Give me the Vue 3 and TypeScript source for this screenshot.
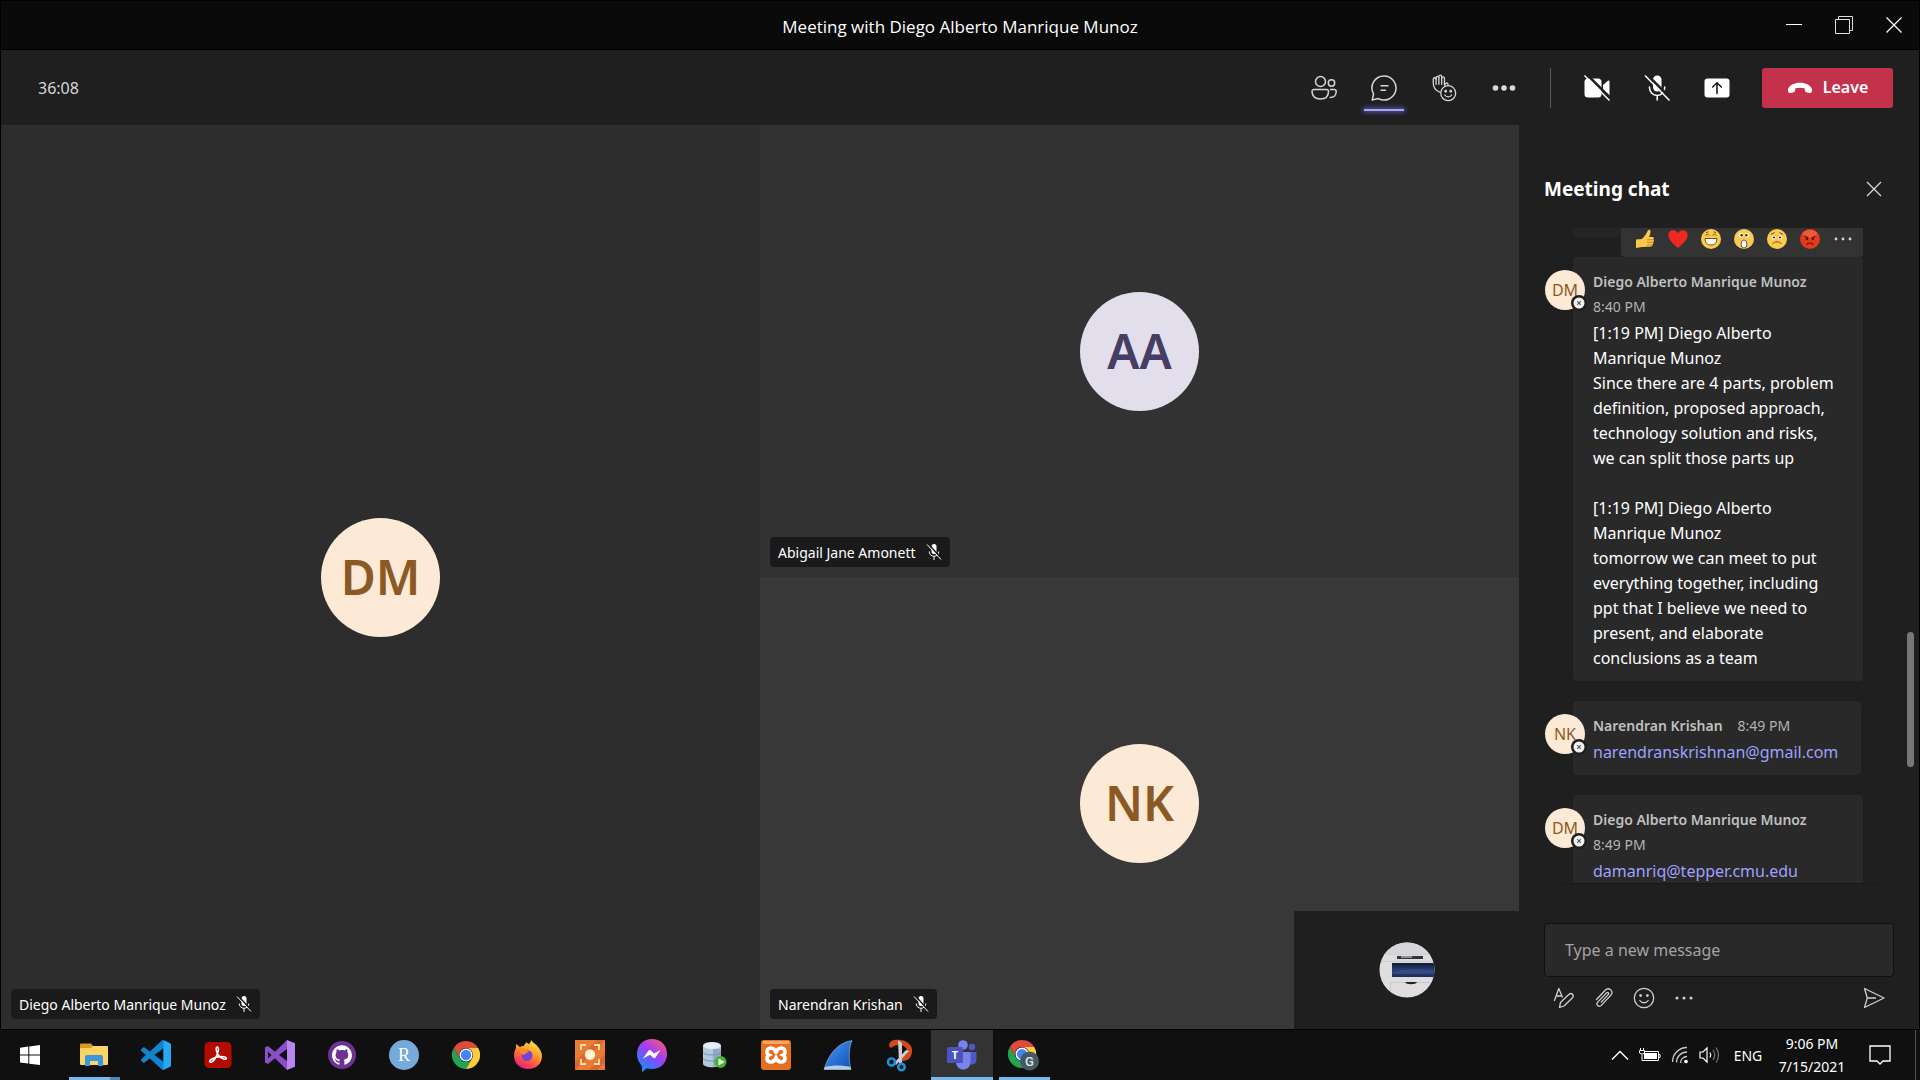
<script setup lang="ts">
import { ref } from 'vue'

interface Participant {
  name: string
  initials: string
  area: string
  tone: string
}

interface ChatMessage {
  id: number
  author: string
  initials: string
  time: string
  stacked: boolean
  text?: string
  email?: string
  reactions?: boolean
}

const participants: Participant[] = [
  { name: 'Diego Alberto Manrique Munoz', initials: 'DM', area: 'left', tone: 'peach' },
  { name: 'Abigail Jane Amonett', initials: 'AA', area: 'top', tone: 'lilac' },
  { name: 'Narendran Krishan', initials: 'NK', area: 'bottom', tone: 'peach' },
]

const messages: ChatMessage[] = [
  {
    id: 1,
    author: 'Diego Alberto Manrique Munoz',
    initials: 'DM',
    time: '8:40 PM',
    stacked: true,
    reactions: true,
    text: [
      '[1:19 PM] Diego Alberto',
      'Manrique Munoz',
      'Since there are 4 parts, problem',
      'definition, proposed approach,',
      'technology solution and risks,',
      'we can split those parts up',
      '',
      '[1:19 PM] Diego Alberto',
      'Manrique Munoz',
      'tomorrow we can meet to put',
      'everything together, including',
      'ppt that I believe we need to',
      'present, and elaborate',
      'conclusions as a team',
    ].join('\n'),
  },
  {
    id: 2,
    author: 'Narendran Krishan',
    initials: 'NK',
    time: '8:49 PM',
    stacked: false,
    email: 'narendranskrishnan@gmail.com',
  },
  {
    id: 3,
    author: 'Diego Alberto Manrique Munoz',
    initials: 'DM',
    time: '8:49 PM',
    stacked: true,
    email: 'damanriq@tepper.cmu.edu',
  },
]

const draft = ref('')
</script>

<template>
  <div class="desktop">
    <header class="titlebar">
      <h1>Meeting with Diego Alberto Manrique Munoz</h1>
      <div class="window-controls">
        <button type="button" aria-label="Minimize">
          <svg width="18" height="18" viewBox="0 0 18 18"><path d="M1 8.500h16" stroke="#fff" /></svg>
        </button>
        <button type="button" aria-label="Restore">
          <svg width="18" height="18" viewBox="0 0 18 18" fill="none" stroke="#ddd">
            <path d="M.5 3.500h14v14H.5zM3.500 3.500v-3h14v14h-3" />
          </svg>
        </button>
        <button type="button" aria-label="Close">
          <svg width="18" height="18" viewBox="0 0 18 18"><path d="M1.500 1.500l15 15M16.500 1.500l-15 15" stroke="#fff" stroke-width="1.200" /></svg>
        </button>
      </div>
    </header>

    <div class="toolbar">
      <span class="timer">36:08</span>
      <nav class="tools" aria-label="Meeting tools">
        <button type="button" aria-label="People">
          <svg width="26" height="26" viewBox="0 0 26 26" fill="none" stroke="#d6d6d6" stroke-width="1.500">
            <circle cx="9.500" cy="6.500" r="5" />
            <circle cx="20.500" cy="8" r="3.200" />
            <path d="M3 14.500h12.500a2 2 0 0 1 2 2c0 5-3.500 7.500-8.200 7.500S1 21.500 1 16.500a2 2 0 0 1 2-2z" />
            <path d="M19 14.500h4.200a2 2 0 0 1 2 2c0 4-2.200 6.200-6.500 6" />
          </svg>
        </button>
        <button type="button" class="active" aria-label="Show conversation">
          <svg width="28" height="28" viewBox="0 0 28 28" fill="none" stroke="#d6d6d6" stroke-width="1.500" stroke-linejoin="round" stroke-linecap="round">
            <path d="M14 2a12 12 0 1 1-5.600 22.600L2.200 26l1.400-6A12 12 0 0 1 14 2z" />
            <path d="M11 11.700h7M11 16.300h4.500" />
          </svg>
        </button>
        <button type="button" aria-label="Raise hand and reactions">
          <svg width="28" height="28" viewBox="0 0 28 30" fill="none" stroke="#d6d6d6" stroke-width="1.400" stroke-linejoin="round" stroke-linecap="round">
            <path d="M9.500 19.500C5 18 2.500 14 2.500 9.500v-4a1.500 1.500 0 0 1 3 0V4a1.500 1.500 0 0 1 3 0V2.800a1.500 1.500 0 0 1 3 0V4.500a1.500 1.500 0 0 1 3 0V12l1.500-2c.8-1 2.700-.2 2.200 1.200" />
            <path d="M5.500 5v6M8.500 4v7M11.500 4v7" />
            <circle cx="18.500" cy="20.500" r="8" fill="#1f1f1f" />
            <circle cx="15.800" cy="18.500" r=".8" fill="#d6d6d6" />
            <circle cx="21.200" cy="18.500" r=".8" fill="#d6d6d6" />
            <path d="M14.800 22.500c1.800 2.600 5.600 2.600 7.400 0" />
          </svg>
        </button>
        <button type="button" aria-label="More actions">
          <svg width="24" height="8" viewBox="0 0 24 8" fill="#dcdcdc">
            <circle cx="3.500" cy="4" r="2.800" /><circle cx="12" cy="4" r="2.800" /><circle cx="20.500" cy="4" r="2.800" />
          </svg>
        </button>
        <span class="divider"></span>
        <button type="button" aria-label="Turn camera on">
          <svg width="28" height="28" viewBox="0 0 28 28">
            <rect x="1.500" y="4.500" width="17" height="19" rx="3.500" fill="#fff" />
            <path d="M20 11l5-4.200a1 1 0 0 1 1.500.8v13.300a1 1 0 0 1-1.500.8L20 17.500z" fill="#fff" />
            <path d="M3.500 0L28 24.500" stroke="#1f1f1f" stroke-width="2.500" />
            <path d="M1.500 1.500L26.500 26.500" stroke="#fff" stroke-width="1.500" />
          </svg>
        </button>
        <button type="button" aria-label="Unmute">
          <svg width="28" height="28" viewBox="0 0 28 28">
            <rect x="10" y="1.500" width="8.500" height="16" rx="4.200" fill="#fff" />
            <path d="M6.500 13v.8a7.600 7.600 0 0 0 15.200 0V13M14.200 21.500V26" fill="none" stroke="#fff" stroke-width="1.500" stroke-linecap="round" />
            <path d="M3.500 0L28 24.500" stroke="#1f1f1f" stroke-width="2.500" />
            <path d="M2 1.500L26.500 26.500" stroke="#fff" stroke-width="1.500" />
          </svg>
        </button>
        <button type="button" aria-label="Share content">
          <svg width="26" height="20" viewBox="0 0 26 20">
            <rect x=".5" y=".5" width="25" height="19" rx="3" fill="#fff" />
            <path d="M13 15.500V5M8.700 9L13 4.700 17.300 9" fill="none" stroke="#1f1f1f" stroke-width="1.600" stroke-linecap="round" stroke-linejoin="round" />
          </svg>
        </button>
        <button type="button" class="leave">
          <svg width="26" height="12" viewBox="0 0 26 12">
            <path d="M13 .8c5.800 0 10.300 2.300 11.700 5.800.5 1.200.3 2.400 0 3.400-.3.900-1.100 1.200-2 1l-3.400-.8c-.8-.2-1.300-.8-1.400-1.600l-.3-2.300C14.800 5.600 11.200 5.600 8.400 6.300l-.3 2.300c-.1.800-.6 1.400-1.400 1.600L3.300 11c-.9.200-1.700-.1-2-1-.3-1-.5-2.200 0-3.400C2.700 3.100 7.200.8 13 .8z" fill="#fff" />
          </svg>
          <span>Leave</span>
        </button>
      </nav>
    </div>

    <main class="meeting">
      <section class="stage" aria-label="Participants">
        <article v-for="p in participants" :key="p.name" class="tile" :class="p.area">
          <span class="avatar" :class="p.tone">{{ p.initials }}</span>
          <span class="nameplate">
            {{ p.name }}
            <svg width="16" height="18" viewBox="0 0 16 18">
              <rect x="5.500" y="1" width="5" height="10" rx="2.500" fill="#fff" />
              <path d="M3.200 8.500a4.800 4.800 0 0 0 9.600 0M8 13.500v3.500" fill="none" stroke="#fff" />
              <path d="M2 .5l13 14.500" stroke="#1a1a1a" stroke-width="1.500" />
              <path d="M1 1.500l14 15" stroke="#fff" />
            </svg>
          </span>
        </article>
        <div class="self-view">
          <svg width="56" height="56" viewBox="0 0 56 56">
            <defs>
              <clipPath id="self-clip"><circle cx="28" cy="28" r="27.500" /></clipPath>
              <linearGradient id="self-blue" x1="0" y1="0" x2="0" y2="1">
                <stop offset="0" stop-color="#111a36" /><stop offset=".5" stop-color="#2b3f72" /><stop offset="1" stop-color="#1c2c5c" />
              </linearGradient>
            </defs>
            <g clip-path="url(#self-clip)">
              <rect width="56" height="56" fill="#dedee0" />
              <path d="M0 0h56v12H0z" fill="#d6d6d8" />
              <path d="M0 12h56v1H0zM0 19h56v1H0z" fill="#cdcdd0" />
              <rect x="18" y="14" width="26" height="3" fill="#33353a" />
              <rect x="22" y="14" width="11" height="2" fill="#8d9094" />
              <rect x="13" y="21" width="43" height="14" fill="url(#self-blue)" />
              <path d="M13 30c14-3 28-3 43-1v3H13z" fill="#3d5690" opacity=".6" />
              <path d="M12 40h44v1H12zM11 40h1v10h-1z" fill="#c8c8cb" />
              <path d="M26 40h12c-1 3-11 3-12 0z" fill="#222" />
            </g>
          </svg>
        </div>
      </section>

      <aside class="chat" aria-label="Meeting chat">
        <header class="chat-head">
          <h2>Meeting chat</h2>
          <button type="button" aria-label="Close chat">
            <svg width="16" height="16" viewBox="0 0 16 16"><path d="M1 1l14 14M15 1L1 15" stroke="#ddd" stroke-width="1.200" /></svg>
          </button>
        </header>

        <div class="chat-body">
          <div class="messages">
            <div class="previous"></div>
            <div v-for="m in messages" :key="m.id" class="message">
              <span class="mini peach">
                {{ m.initials }}
                <svg class="status" width="16" height="16" viewBox="0 0 16 16">
                  <circle cx="8" cy="8" r="8" fill="#1f1f1f" />
                  <circle cx="8" cy="8" r="5.500" fill="#f2f2f2" />
                  <path d="M6.200 6.200l3.600 3.600M9.800 6.200L6.200 9.800" stroke="#555" stroke-width="1.100" />
                </svg>
              </span>
              <div class="bubble" :class="{ fit: !m.stacked }">
                <div v-if="m.reactions" class="reactions">
                  <button type="button" aria-label="Like">
                    <svg width="20" height="20" viewBox="0 0 20 20">
                      <path d="M1 10.500l6-.5c3-3 4.500-5.500 5.800-8.500.6-1.300 2.700-.8 2.700 1 0 1.900-.7 4-1.500 5.500h3.500c1.500 0 1.800 2 .7 2.500 1.100.5 1 2.300-.2 2.600.8.700.5 2.200-.6 2.500.4 1-.2 2-1.400 2-3.500.2-6 .6-9 .3L1 19z" fill="#fcc84a" />
                      <path d="M12 10.800h6M12 13.400h5.800M12 16h5" stroke="#c07d1c" stroke-width=".9" />
                    </svg>
                  </button>
                  <button type="button" aria-label="Heart">
                    <svg width="20" height="20" viewBox="0 0 20 20"><path d="M10 19C5 14.500.3 10.500.3 6.200.3 1 7-.6 10 4.200 13-.6 19.700 1 19.700 6.200c0 4.300-4.700 8.300-9.700 12.800z" fill="#f0281f" /></svg>
                  </button>
                  <button type="button" aria-label="Laugh">
                    <svg width="20" height="20" viewBox="0 0 20 20">
                      <circle cx="10" cy="10" r="10" fill="#fbcb4f" />
                      <path d="M4 9.500h12c0 4-2.500 6.500-6 6.500s-6-2.500-6-6.500z" fill="#fff" stroke="#7a4b12" />
                      <path d="M4.500 6.500c1-1.500 3-1.500 4 0M11.500 6.500c1-1.500 3-1.500 4 0M5 3.600l2.500-.8M15 3.600l-2.500-.8" fill="none" stroke="#7a4b12" />
                    </svg>
                  </button>
                  <button type="button" aria-label="Surprised">
                    <svg width="20" height="20" viewBox="0 0 20 20">
                      <circle cx="10" cy="10" r="10" fill="#fbcb4f" />
                      <circle cx="7" cy="6.300" r="2.300" fill="#fff" /><circle cx="13" cy="6.300" r="2.300" fill="#fff" />
                      <circle cx="7.600" cy="6.300" r="1.200" fill="#3a2a15" /><circle cx="12.400" cy="6.300" r="1.200" fill="#3a2a15" />
                      <ellipse cx="10" cy="15" rx="3" ry="4" fill="#fff" stroke="#6e5a3c" />
                    </svg>
                  </button>
                  <button type="button" aria-label="Sad">
                    <svg width="20" height="20" viewBox="0 0 20 20">
                      <circle cx="10" cy="10" r="10" fill="#fbcb4f" />
                      <circle cx="6.700" cy="8.500" r="2" fill="#fff" /><circle cx="13.300" cy="8.500" r="2" fill="#fff" />
                      <circle cx="7" cy="8.500" r="1.100" fill="#3a2a15" /><circle cx="13" cy="8.500" r="1.100" fill="#3a2a15" />
                      <path d="M5.500 15c2-3 7-3 9 0M4 5.500l3.500-2M16 5.500l-3.500-2" fill="none" stroke="#7a4b12" />
                    </svg>
                  </button>
                  <button type="button" aria-label="Angry">
                    <svg width="20" height="20" viewBox="0 0 20 20">
                      <circle cx="10" cy="10" r="10" fill="#e23a1c" /><ellipse cx="10" cy="5" rx="7" ry="4" fill="#ee5a3a" />
                      <path d="M4.500 7l4 2M15.500 7l-4 2M6.500 15.500c2-2 5-2 7 0" fill="none" stroke="#5c1408" stroke-width="1.200" />
                      <circle cx="7" cy="10" r="1.200" fill="#5c1408" /><circle cx="13" cy="10" r="1.200" fill="#5c1408" />
                    </svg>
                  </button>
                  <button type="button" aria-label="More options">
                    <svg width="18" height="4" viewBox="0 0 18 4" fill="#d6d6d6"><circle cx="2" cy="2" r="1.400" /><circle cx="9" cy="2" r="1.400" /><circle cx="16" cy="2" r="1.400" /></svg>
                  </button>
                </div>
                <div class="meta" :class="{ stacked: m.stacked }">
                  <strong>{{ m.author }}</strong>
                  <time>{{ m.time }}</time>
                </div>
                <p v-if="m.text">{{ m.text }}</p>
                <a v-if="m.email" :href="'mailto:' + m.email">{{ m.email }}</a>
              </div>
            </div>
          </div>
          <span class="scroll-thumb"></span>
        </div>

        <form class="composer" @submit.prevent>
          <input v-model="draft" type="text" aria-label="Message" placeholder="Type a new message" />
          <div class="composer-tools">
            <button type="button" aria-label="Format">
              <svg width="22" height="22" viewBox="0 0 22 22" fill="none" stroke="#d0d0d0" stroke-width="1.300" stroke-linejoin="round" stroke-linecap="round">
                <path d="M1.500 13.500L5.800 1.500l3.500 8.500M3 9h5.500" />
                <path d="M6.500 20.500l1-5L16 7.200c2.500-2 5.500 1 3.500 3.500L11 19z" />
              </svg>
            </button>
            <button type="button" aria-label="Attach">
              <svg width="20" height="22" viewBox="0 0 20 22" fill="none" stroke="#d0d0d0" stroke-width="1.300" stroke-linecap="round">
                <path d="M2.500 12.500l8.700-9.300c3.800-3.800 9 1.200 5.500 5.200l-9.400 10c-2.500 2.400-5.800-.8-3.600-3.300l8.800-9.200c1.300-1.200 2.800.4 1.700 1.700l-7 7.500" />
              </svg>
            </button>
            <button type="button" aria-label="Emoji">
              <svg width="22" height="22" viewBox="0 0 22 22" fill="none" stroke="#d0d0d0" stroke-width="1.300" stroke-linecap="round">
                <circle cx="11" cy="11" r="9.700" /><path d="M6.800 13.500c2 3 6.400 3 8.400 0" />
                <circle cx="7.600" cy="8.600" r=".8" fill="#d0d0d0" /><circle cx="14.400" cy="8.600" r=".8" fill="#d0d0d0" />
              </svg>
            </button>
            <button type="button" aria-label="More">
              <svg width="18" height="4" viewBox="0 0 18 4" fill="#d0d0d0"><circle cx="2" cy="2" r="1.500" /><circle cx="9" cy="2" r="1.500" /><circle cx="16" cy="2" r="1.500" /></svg>
            </button>
            <button type="submit" class="send" aria-label="Send">
              <svg width="22" height="22" viewBox="0 0 22 22" fill="none" stroke="#d0d0d0" stroke-width="1.300" stroke-linejoin="round">
                <path d="M1.500 1.500L21 11 1.500 20.500 4.300 11zM4.300 11H13" />
              </svg>
            </button>
          </div>
        </form>
      </aside>
    </main>

    <footer class="taskbar">
      <button type="button" class="start" aria-label="Start">
        <svg width="20" height="20" viewBox="0 0 20 20" fill="#fff"><path d="M0 2.800l8.300-1.200v8H0zM9.300 1.500L20 0v9.600H9.300zM0 10.600h8.300v8L0 17.400zM9.300 10.600H20V20L9.300 18.700z" /></svg>
      </button>
      <div class="apps">
        <button type="button" class="open multi" aria-label="File Explorer">
          <svg width="28" height="24" viewBox="0 0 28 24">
            <path d="M0 1.500Q0 .5 1 .5h10l2 2.500h14v5H0z" fill="#d99a1c" />
            <path d="M0 5h11l2-2h14q1 0 1 1v17q0 1-1 1H1q-1 0-1-1z" fill="#fbd463" />
            <path d="M5 23V14q0-2 2-2h14q2 0 2 2v9h-5v-5h-8v5z" fill="#3c96dc" />
          </svg>
        </button>
        <button type="button" aria-label="Visual Studio Code">
          <svg width="30" height="30" viewBox="0 0 24 24">
            <path fill="#1183cf" d="M23.150 2.587L18.210.21a1.494 1.494 0 0 0-1.705.29l-9.460 8.630-4.120-3.128a.999.999 0 0 0-1.276.057L.327 7.261A1 1 0 0 0 .326 8.740L3.899 12 .326 15.260a1 1 0 0 0 .001 1.479L1.650 17.940a.999.999 0 0 0 1.276.057l4.120-3.128 9.460 8.630a1.492 1.492 0 0 0 1.704.29l4.942-2.377A1.500 1.500 0 0 0 24 20.060V3.939a1.500 1.500 0 0 0-.85-1.352zm-5.146 14.861L10.826 12l7.178-5.448v10.896z" />
            <path fill="#2aa7f2" d="M18 .2l5.200 2.400q.8.500.8 1.400v16q0 1-.8 1.400L18 23.800z" />
          </svg>
        </button>
        <button type="button" aria-label="Adobe Acrobat">
          <svg width="28" height="28" viewBox="0 0 28 28">
            <rect x=".5" y="1" width="27" height="26" rx="4.500" fill="#b30b00" />
            <path d="M13.200 6c2.300 0 1 6-1.200 10-1.700 3.200-4.500 6-6 5-1.600-1.300 2.500-3.800 6.500-4.800 4-1 9.800-.8 9.800 1.200s-4.500.4-7.300-2.400C12.200 12.200 11.300 6 13.200 6z" fill="none" stroke="#fff" stroke-width="1.600" />
          </svg>
        </button>
        <button type="button" aria-label="Visual Studio">
          <svg width="30" height="30" viewBox="0 0 30 30">
            <path fill-rule="evenodd" d="M0 7.500L3 6l7 5.800L22 0l2 2v26l-2 2L10 18.200 3 24l-3-1.500zm3 4v7L6.500 15zm19-2.500L14 15l8 6z" fill="#8a4fc8" />
            <path d="M22 0l8 3.200v23.600L22 30z" fill="#b685f0" />
          </svg>
        </button>
        <button type="button" aria-label="GitHub Desktop">
          <svg width="28" height="28" viewBox="0 0 28 28">
            <circle cx="14" cy="14" r="14" fill="#6e3294" />
            <g transform="translate(4 4) scale(.83)">
              <path fill="#fff" d="M12 .297c-6.630 0-12 5.373-12 12 0 5.303 3.438 9.800 8.205 11.385.6.113.82-.258.82-.577 0-.285-.01-1.040-.015-2.040-3.338.724-4.042-1.610-4.042-1.610C4.422 18.070 3.633 17.700 3.633 17.700c-1.087-.744.084-.729.084-.729 1.205.084 1.838 1.236 1.838 1.236 1.070 1.835 2.809 1.305 3.495.998.108-.776.417-1.305.76-1.605-2.665-.3-5.466-1.332-5.466-5.930 0-1.310.465-2.380 1.235-3.220-.135-.303-.54-1.523.105-3.176 0 0 1.005-.322 3.300 1.230.96-.267 1.980-.399 3-.405 1.020.006 2.040.138 3 .405 2.280-1.552 3.285-1.230 3.285-1.230.645 1.653.24 2.873.12 3.176.765.84 1.230 1.910 1.230 3.220 0 4.610-2.805 5.625-5.475 5.920.42.36.81 1.096.81 2.220 0 1.606-.015 2.896-.015 3.286 0 .315.21.69.825.57C20.565 22.092 24 17.592 24 12.297c0-6.627-5.373-12-12-12" />
            </g>
          </svg>
        </button>
        <button type="button" aria-label="RStudio">
          <svg width="30" height="30" viewBox="0 0 30 30"><circle cx="15" cy="15" r="15" fill="#75aadb" /><text x="15" y="21" text-anchor="middle" font-family="Liberation Serif, serif" font-size="18" fill="#fff">R</text></svg>
        </button>
        <button type="button" aria-label="Google Chrome">
          <svg width="28" height="28" viewBox="0 0 24 24">
            <path d="M1.600 6l5.200 9a6 6 0 0 0 10.400 0L12 24A12 12 0 0 1 1.600 6z" fill="#23a455" />
            <path d="M22.400 6H12a6 6 0 0 1 5.200 9L12 24A12 12 0 0 0 22.400 6z" fill="#fccd3c" />
            <path d="M12 0a12 12 0 0 1 10.400 6H12a6 6 0 0 0-5.200 9L1.600 6A12 12 0 0 1 12 0z" fill="#dd4b3e" />
            <circle cx="12" cy="12" r="5.600" fill="#fff" /><circle cx="12" cy="12" r="4.400" fill="#4285f4" />
          </svg>
        </button>
        <button type="button" aria-label="Firefox">
          <svg width="30" height="30" viewBox="0 0 30 30">
            <defs><linearGradient id="fox" x1=".8" y1="0" x2=".3" y2="1"><stop offset="0" stop-color="#fff14a" /><stop offset=".45" stop-color="#ff9a28" /><stop offset=".75" stop-color="#ff4a4a" /><stop offset="1" stop-color="#e3208a" /></linearGradient></defs>
            <path d="M18 0c2 3 5 4 7 7 2 2 4 6 4 9 0 8-6 13-14 13S1 23 1 16c0-4 1-6 2-8l0-4 4 3c1-1 2-1 4-1 0-2 2-3 3-4 0 1 1 2 2 2 1-1 2-2 2-4z" fill="url(#fox)" />
            <circle cx="14" cy="15.500" r="5.500" fill="#7a45d6" />
            <path d="M5 8c3-1 6 0 8 2l3 1c-1 2-4 2-5 4-3-1-5-3-6-7z" fill="#ff8a2a" />
          </svg>
        </button>
        <button type="button" aria-label="Screen recorder">
          <svg width="30" height="30" viewBox="0 0 30 30">
            <path d="M0 0h30v30H0z" fill="#ea7b34" /><path d="M0 22L22 0h8L0 30zM14 30l16-16v8l-8 8z" fill="#d9682a" />
            <circle cx="15" cy="14.500" r="5.200" fill="#fff3d8" />
            <path d="M6 10V5h5M19 5h5v5M24 19v5h-5M11 24H6v-5" fill="none" stroke="#ffe0bd" stroke-width="1.800" />
          </svg>
        </button>
        <button type="button" aria-label="Messenger">
          <svg width="30" height="34" viewBox="0 -2 30 34">
            <defs><linearGradient id="msgr" x1=".9" y1="0" x2=".2" y2="1"><stop offset="0" stop-color="#ff5f6e" /><stop offset=".45" stop-color="#a33bf5" /><stop offset="1" stop-color="#0a93ff" /></linearGradient></defs>
            <path d="M15 -1c9 0 15 6.500 15 15S24 29 15 29c-1.800 0-3.500-.3-5-.7L5 32v-6C2 23 0 19 0 14 0 5.500 6-1 15-1z" fill="url(#msgr)" />
            <path d="M6 18.500l5.500-8q1.200-1.200 2.500 0l3 3 6.500-3.500L18.500 17.500q-1.200 1.200-2.500 0l-3-2.800z" fill="#fff" />
          </svg>
        </button>
        <button type="button" aria-label="SQL database">
          <svg width="26" height="28" viewBox="0 0 26 28">
            <path d="M2 4.500v18c0 5 18 5 18 0v-18z" fill="#b3c9de" /><path d="M12 8h8v15c-2 2-5 3-8 3z" fill="#8eacca" />
            <ellipse cx="11" cy="4.500" rx="9" ry="3.500" fill="#e3edf6" />
            <path d="M2 11c0 4 18 4 18 0M2 17c0 4 18 4 18 0" fill="none" stroke="#7995b2" />
            <circle cx="19.500" cy="21" r="6" fill="#45b52b" /><path d="M17.500 17.500l6 3.500-6 3.500z" fill="#fff" />
          </svg>
        </button>
        <button type="button" aria-label="XAMPP">
          <svg width="30" height="30" viewBox="0 0 30 30">
            <rect width="30" height="30" rx="3" fill="#e2701e" /><path d="M2 1h26v3H2z" fill="#f6a66c" />
            <path d="M15 13c-1-4-3-5-5-5-3 0-4 2-4 4 0 1.500 1 2.500 2 3-1 .5-2 1.500-2 3 0 2.500 1.500 4 4 4s4-1.500 5-4c1 2.500 2.500 4 5 4s4-1.500 4-4c0-1.500-1-2.500-2-3 1-.5 2-1.500 2-3 0-2-1-4-4-4-2 0-4 1-5 5z" fill="none" stroke="#fff" stroke-width="3.600" />
          </svg>
        </button>
        <button type="button" aria-label="Wireshark">
          <svg width="30" height="30" viewBox="0 0 30 30">
            <defs><linearGradient id="fin" x1="0" y1="0" x2="1" y2="1"><stop offset="0" stop-color="#4a9bf2" /><stop offset="1" stop-color="#0a4fb8" /></linearGradient></defs>
            <path d="M1 29.500C6 14 14 3 29 .5c-3 7-4 18-1 29z" fill="url(#fin)" stroke="#9cc3ee" stroke-width=".6" />
            <path d="M2 27c8-2 18-2 25.500 0l.5 2.500H1z" fill="#b8cbe0" />
          </svg>
        </button>
        <button type="button" aria-label="Snipping Tool">
          <svg width="28" height="36" viewBox="0 0 28 36">
            <path d="M3 9c0-6 6-7 12-6 7 1 12 6 11 12-1 7-5 9-10 9v-5c3 0 5-2 5-5 0-4-4-6-8-6-3 0-6 1-8 3z" fill="#d24a1c" />
            <path d="M12 3l4 3v20h-3zM20 13l3 1-13 14-2-2z" fill="#c9cfd4" />
            <circle cx="5.500" cy="25" r="3.500" fill="none" stroke="#1f8fd6" stroke-width="2.600" />
            <circle cx="15.500" cy="30" r="3.200" fill="none" stroke="#1f8fd6" stroke-width="2.600" />
          </svg>
        </button>
        <button type="button" class="open current" aria-label="Microsoft Teams">
          <svg width="30" height="30" viewBox="0 0 30 30">
            <circle cx="25" cy="7" r="3.200" fill="#5059c9" /><path d="M20 12h8.500q1 0 1 1v7c0 6-9.500 6-9.500 0z" fill="#5059c9" />
            <circle cx="16" cy="5" r="4.800" fill="#7b83eb" /><path d="M9 12h13.500q1 0 1 1v9c0 10-14.500 10-14.500 0z" fill="#7b83eb" />
            <rect y="7" width="16" height="16" rx="1.500" fill="#4b53bc" />
            <text x="8" y="19" text-anchor="middle" font-family="Open Sans, sans-serif" font-size="11" font-weight="700" fill="#fff">T</text>
          </svg>
        </button>
        <button type="button" class="open" aria-label="Google Chrome, profile G">
          <svg width="32" height="32" viewBox="0 0 32 32">
            <g transform="translate(0 1) scale(1.170)">
              <path d="M1.600 6l5.200 9a6 6 0 0 0 10.400 0L12 24A12 12 0 0 1 1.600 6z" fill="#23a455" />
              <path d="M22.400 6H12a6 6 0 0 1 5.200 9L12 24A12 12 0 0 0 22.400 6z" fill="#fccd3c" />
              <path d="M12 0a12 12 0 0 1 10.400 6H12a6 6 0 0 0-5.200 9L1.600 6A12 12 0 0 1 12 0z" fill="#dd4b3e" />
              <circle cx="12" cy="12" r="5.600" fill="#fff" /><circle cx="12" cy="12" r="4.400" fill="#4285f4" />
            </g>
            <circle cx="21.500" cy="22" r="9.500" fill="#455a64" />
            <text x="21.500" y="26.500" text-anchor="middle" font-family="Roboto, sans-serif" font-size="13" font-weight="500" fill="#dfe5e8">G</text>
          </svg>
        </button>
      </div>
      <div class="tray">
        <button type="button" aria-label="Show hidden icons">
          <svg width="18" height="12" viewBox="0 0 18 12"><path d="M1 10.500l8-8 8 8" fill="none" stroke="#fff" stroke-width="1.400" /></svg>
        </button>
        <button type="button" aria-label="Battery">
          <svg width="22" height="16" viewBox="0 0 22 16">
            <path d="M5.500 4.500h14v9H3V10M19.500 7.500H21v3h-1.500" fill="none" stroke="#fff" /><path d="M5 6h13v6H5z" fill="#fff" />
            <path d="M1.500 1v2.500M4.500 1v2.500M.5 3.500h5V6q-2.500 2.500-5 0zM3 7.500V10" fill="#101010" stroke="#fff" />
          </svg>
        </button>
        <button type="button" aria-label="Network">
          <svg width="18" height="18" viewBox="0 0 18 18" fill="none" stroke="#c8c8c8" stroke-width="1.300">
            <path d="M1.500 16A14.500 14.500 0 0 1 16 1.500M5.500 16.500A10.500 10.500 0 0 1 16 6M9.500 17A6.500 6.500 0 0 1 16 10.500" />
            <circle cx="15" cy="15.500" r="1.200" fill="#fff" stroke="#fff" />
          </svg>
        </button>
        <button type="button" aria-label="Volume">
          <svg width="22" height="18" viewBox="0 0 22 18" fill="none" stroke="#fff" stroke-width="1.200">
            <path d="M1 6h3l4-4v14l-4-4H1z" /><path d="M11 6.500q1.500 2.500 0 5" />
            <path d="M14 4q3.500 5 0 10M17 1.500q5 7.500 0 15" stroke="#777" />
          </svg>
        </button>
        <button type="button" class="lang">ENG</button>
        <button type="button" class="clock"><time>9:06 PM</time><time>7/15/2021</time></button>
        <button type="button" class="notify" aria-label="Notifications">
          <svg width="22" height="20" viewBox="0 0 22 20"><path d="M1 1h20v15h-7l-3 3-3-3H1z" fill="none" stroke="#fff" stroke-width="1.300" /></svg>
        </button>
        <span class="peek"></span>
      </div>
    </footer>
  </div>
</template>

<style>
body {
  margin: 0;
  background: #000;
}
</style>

<style scoped>
.desktop {
  display: flex;
  flex-direction: column;
  height: 100vh;
  overflow: hidden;
  background: #000;
  color: #fff;
  font-family: 'Segoe UI', 'Noto Sans', 'Open Sans', sans-serif;
  font-size: 16px;
  line-height: 25px;
}

h1,
h2,
p {
  margin: 0;
}

button {
  display: flex;
  align-items: center;
  justify-content: center;
  padding: 0;
  border: 0;
  background: none;
  color: inherit;
  font: inherit;
}

svg {
  display: block;
  flex: none;
}

.titlebar {
  display: grid;
  grid-template-columns: 1fr auto 1fr;
  align-items: center;
  height: 48px;
  margin: 1px;
  background: #0a0a0a;
}

.titlebar h1 {
  grid-column: 2;
  padding-top: 3px;
  font-family: 'Segoe UI', 'Open Sans', sans-serif;
  font-size: 17px;
  font-weight: 400;
}

.window-controls {
  display: flex;
  justify-content: flex-end;
}

.window-controls button {
  width: 50px;
  height: 46px;
}

.toolbar {
  display: flex;
  align-items: center;
  justify-content: space-between;
  height: 75px;
  flex: none;
  margin: 0 1px;
  padding: 0 26px 0 37px;
  background: #1f1f1f;
}

.timer {
  padding-top: 2px;
  color: #d6d6d6;
}

.tools {
  display: flex;
  align-items: center;
}

.tools button {
  position: relative;
  width: 60px;
  height: 48px;
}

.tools .active::after {
  content: '';
  position: absolute;
  bottom: 1px;
  left: 10px;
  right: 10px;
  height: 2px;
  background: #a6a7ea;
  box-shadow: 0 0 5px 1px #5b5fc7;
}

.divider {
  width: 1px;
  height: 40px;
  margin: 0 16px;
  background: #5a5a5a;
}

.tools .leave {
  gap: 10px;
  width: 131px;
  height: 40px;
  margin-left: 15px;
  border-radius: 3px;
  background: #c4314b;
  font-weight: 600;
}

.meeting {
  display: flex;
  flex: 1;
  min-height: 0;
  margin: 0 1px 1px;
}

.stage {
  position: relative;
  display: grid;
  flex: 1;
  grid-template: 'left top' 1fr 'left bottom' 1fr / 1fr 1fr;
}

.tile {
  position: relative;
  display: flex;
  align-items: center;
  justify-content: center;
}

.left {
  grid-area: left;
  background: #2d2d2d;
}

.top {
  grid-area: top;
  background: #323232;
}

.bottom {
  grid-area: bottom;
  background: #383838;
}

.avatar {
  display: flex;
  align-items: center;
  justify-content: center;
  width: 119px;
  height: 117px;
  padding-bottom: 2px;
  border-radius: 50%;
  font-size: 48px;
  font-weight: 600;
}

.peach {
  background: #fce9d6;
  color: #8b5a24;
}

.lilac {
  background: #e2deec;
  color: #463e62;
}

.nameplate {
  position: absolute;
  left: 10px;
  bottom: 10px;
  display: flex;
  align-items: center;
  gap: 10px;
  height: 30px;
  padding: 0 8px;
  border-radius: 4px;
  background: #1a1a1a;
  font-size: 14px;
  white-space: nowrap;
}

.self-view {
  position: absolute;
  right: 0;
  bottom: 0;
  display: flex;
  align-items: center;
  justify-content: center;
  width: 225px;
  height: 118px;
  background: #1f1f1f;
}

.chat {
  display: flex;
  flex-direction: column;
  width: 400px;
  flex: none;
  background: #1f1f1f;
}

.chat-head {
  display: flex;
  align-items: center;
  justify-content: space-between;
  padding: 50px 35px 25px 25px;
}

.chat-head h2 {
  font-size: 19px;
  font-weight: 700;
  line-height: 28px;
}

.chat-head button {
  width: 20px;
  height: 20px;
}

.chat-body {
  position: relative;
  flex: 1;
  min-height: 0;
}

.messages {
  display: flex;
  flex-direction: column;
  gap: 20px;
  height: 100%;
  padding: 0 56px 0 26px;
  overflow: hidden;
}

.previous {
  flex: none;
  height: 9px;
  margin: 0 0 0 28px;
  border-radius: 0 0 4px 4px;
  background: #252525;
}

.message {
  display: flex;
  flex: none;
}

.mini {
  position: relative;
  z-index: 1;
  display: flex;
  align-items: center;
  justify-content: center;
  width: 40px;
  height: 40px;
  margin: 13px -12px 0 0;
  border-radius: 50%;
  font-size: 16px;
  flex: none;
}

.status {
  position: absolute;
  right: -2px;
  bottom: -1px;
}

.bubble {
  position: relative;
  flex: 1;
  padding: 12px 0 10px 20px;
  border-radius: 4px;
  background: #292929;
}

.fit {
  margin-right: 2px;
}

.bubble p {
  white-space: pre;
}

.bubble a {
  display: block;
  color: #9ea2ff;
  text-decoration: none;
}

.reactions {
  position: absolute;
  right: 0;
  bottom: 100%;
  display: flex;
  align-items: center;
  width: 231px;
  height: 37px;
  padding: 0 4px 0 7px;
  border-radius: 4px;
  background: #333;
}

.reactions button {
  flex: 1;
}

.meta {
  display: flex;
  gap: 15px;
  padding-bottom: 2px;
  color: #b3b3b3;
  font-size: 14px;
}

.meta strong {
  font-weight: 600;
  color: #c0c0c0;
}

.stacked {
  flex-direction: column;
  gap: 0;
}

.scroll-thumb {
  position: absolute;
  right: 5px;
  bottom: 116px;
  width: 7px;
  height: 135px;
  border-radius: 4px;
  background: #777;
}

.composer {
  display: flex;
  flex-direction: column;
  padding: 39px 25px 0;
}

.composer::before {
  content: '';
  height: 1px;
  margin: -39px 15px 39px;
  background: #181818;
}

.composer input {
  height: 54px;
  box-sizing: border-box;
  padding: 0 20px;
  border: 1px solid #101010;
  border-radius: 4px;
  background: #292929;
  color: #fff;
  font: inherit;
}

.composer input::placeholder {
  color: #a3a3a3;
  opacity: 1;
}

.composer-tools {
  display: flex;
  height: 52px;
}

.composer-tools button {
  width: 40px;
  height: 42px;
}

.composer-tools .send {
  margin-left: auto;
}

.taskbar {
  display: flex;
  height: 50px;
  flex: none;
  background: #101010;
}

.start {
  width: 60px;
}

.apps {
  display: flex;
  flex: 1;
  padding-left: 3px;
}

.apps button {
  position: relative;
  width: 62px;
}

.current {
  background: #333;
}

.open::after {
  content: '';
  position: absolute;
  left: 6px;
  right: 5px;
  bottom: 0;
  height: 3px;
  background: #76b9ed;
}

.current::after {
  left: 0;
  right: 0;
}

.multi::after {
  background: linear-gradient(to right, #76b9ed 80%, #5486ad 80%);
}

.tray {
  display: flex;
  align-items: stretch;
  font-size: 14px;
  line-height: 23px;
}

.tray button {
  width: 30px;
}

.tray .lang {
  width: 46px;
}

.tray .clock {
  flex-direction: column;
  width: 82px;
}

.tray .notify {
  width: 54px;
}

.peek {
  width: 4px;
  margin-left: 8px;
  border-left: 1px solid #555;
}
</style>
